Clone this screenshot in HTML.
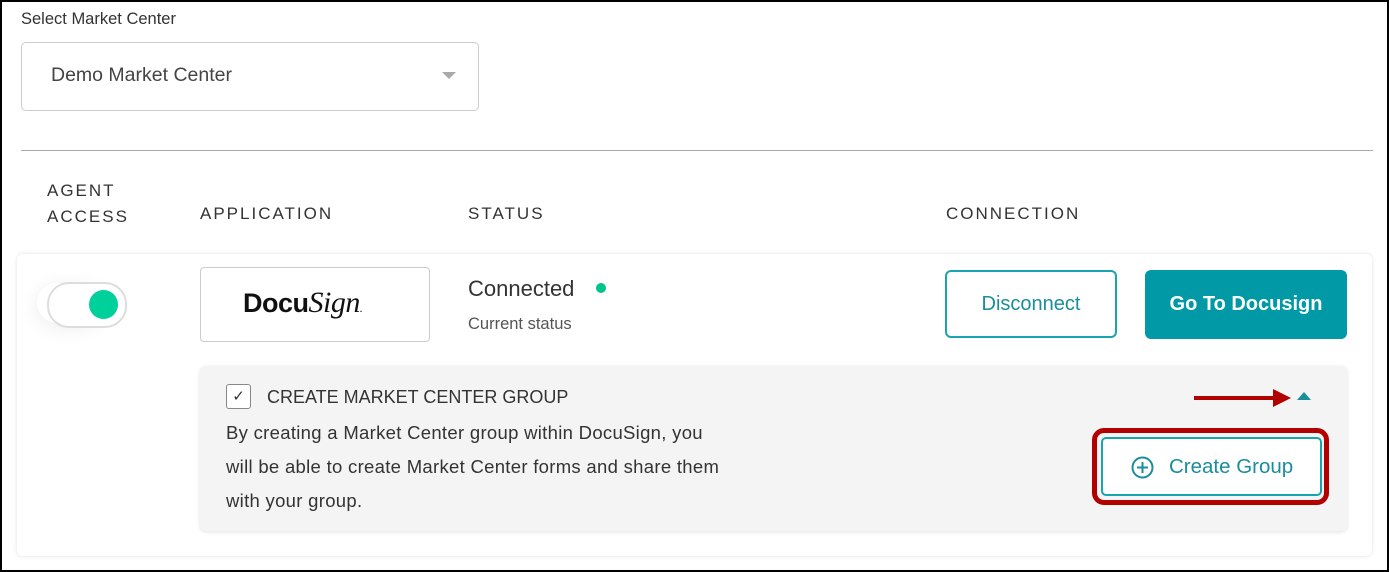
<!DOCTYPE html>
<html><head><style>
body{margin:0;width:1389px;height:572px;overflow:hidden;background:#fff;font-family:"Liberation Sans",sans-serif;color:#333;}
.frame{position:absolute;left:0;top:0;width:1385px;height:568px;border:2px solid #000;}
.a{position:absolute;}
.hdr{font-size:17px;letter-spacing:2px;color:#333;}
</style></head><body>
<div class="frame"></div>
<div class="a" style="left:21px;top:10px;font-size:16.5px;color:#333">Select Market Center</div>
<div class="a" style="left:21px;top:42px;width:456px;height:67px;border:1px solid #ccc;border-radius:5px"></div>
<div class="a" style="left:51px;top:64px;font-size:19.5px;color:#444">Demo Market Center</div>
<div class="a" style="left:442px;top:72px;width:0;height:0;border-left:7px solid transparent;border-right:7px solid transparent;border-top:7px solid #aaa"></div>
<div class="a" style="left:21px;top:150px;width:1352px;height:1px;background:#aaa"></div>
<div class="a hdr" style="left:47px;top:178px;line-height:26px">AGENT<br>ACCESS</div>
<div class="a hdr" style="left:200px;top:204px">APPLICATION</div>
<div class="a hdr" style="left:468px;top:204px">STATUS</div>
<div class="a hdr" style="left:946px;top:204px">CONNECTION</div>
<div class="a" style="left:17px;top:254px;width:1355px;height:302px;border-radius:6px;box-shadow:0 0 4px rgba(0,0,0,.12);background:#fff"></div>
<div class="a" style="left:37px;top:283px;width:64px;height:40px;border-radius:30px;box-shadow:0 4px 20px rgba(0,0,0,.08)"></div>
<div class="a" style="left:47px;top:282px;width:76px;height:42px;border:2px solid #ddd;border-radius:22px;background:#fff"></div>
<div class="a" style="left:89px;top:290px;width:29px;height:29px;border-radius:50%;background:#00d09a"></div>
<div class="a" style="left:200px;top:267px;width:228px;height:73px;border:1px solid #ccc;border-radius:4px"></div>
<div class="a" style="left:243px;top:286px;font-size:27px;font-weight:bold;color:#111;letter-spacing:-0.5px">Docu<span style="font-family:'Liberation Serif',serif;font-style:italic;font-weight:normal;font-size:30px">Sign</span><span style="font-size:8px">.</span></div>
<div class="a" style="left:468px;top:276px;font-size:22px;color:#333">Connected</div>
<div class="a" style="left:596px;top:283px;width:10px;height:10px;border-radius:50%;background:#00c389"></div>
<div class="a" style="left:468px;top:315px;font-size:16.5px;color:#555">Current status</div>
<div class="a" style="left:945px;top:270px;width:172px;height:68px;border:2px solid #1aa3b0;border-radius:6px;box-sizing:border-box;text-align:center;line-height:64px;font-size:20px;color:#1a8e9a">Disconnect</div>
<div class="a" style="left:1145px;top:270px;width:202px;height:69px;background:#0099a5;border-radius:6px;text-align:center;line-height:69px;font-size:20px;font-weight:bold;color:#fff">Go To Docusign</div>
<div class="a" style="left:200px;top:366px;width:1147px;height:165px;background:#f4f4f4;border-radius:6px;box-shadow:0 1px 4px rgba(0,0,0,.12)"></div>
<div class="a" style="left:226px;top:384px;width:25px;height:25px;border:1px solid #888;border-radius:3px;background:#fff;box-sizing:border-box;text-align:center;line-height:23px;font-size:15px;color:#333">✓</div>
<div class="a" style="left:267px;top:387px;font-size:18px;color:#333">CREATE MARKET CENTER GROUP</div>
<div class="a" style="left:226px;top:416px;font-size:18.5px;letter-spacing:0.3px;color:#333;line-height:34px;width:600px">By creating a Market Center group within DocuSign, you<br>will be able to create Market Center forms and share them<br>with your group.</div>
<div class="a" style="left:1194px;top:396px;width:80px;height:4px;background:#b00000"></div>
<div class="a" style="left:1273px;top:389px;width:0;height:0;border-top:9px solid transparent;border-bottom:9px solid transparent;border-left:18px solid #b00000"></div>
<div class="a" style="left:1297px;top:392px;width:0;height:0;border-left:7px solid transparent;border-right:7px solid transparent;border-bottom:8px solid #1a8e9a"></div>
<div class="a" style="left:1092px;top:428px;width:237px;height:77px;border:5px solid #b00000;border-radius:12px;box-sizing:border-box"></div>
<div class="a" style="left:1101px;top:437px;width:221px;height:59px;border:2px solid #1aa3b0;border-radius:5px;background:#fff;box-sizing:border-box"></div>
<svg class="a" style="left:1131px;top:456px" width="23" height="23" viewBox="0 0 23 23"><circle cx="11.5" cy="11.5" r="10" fill="none" stroke="#1a8e9a" stroke-width="2"/><path d="M11.5 6v11M6 11.5h11" stroke="#1a8e9a" stroke-width="2"/></svg>
<div class="a" style="left:1169px;top:455px;font-size:20.5px;color:#1a8e9a">Create Group</div>
</body></html>
